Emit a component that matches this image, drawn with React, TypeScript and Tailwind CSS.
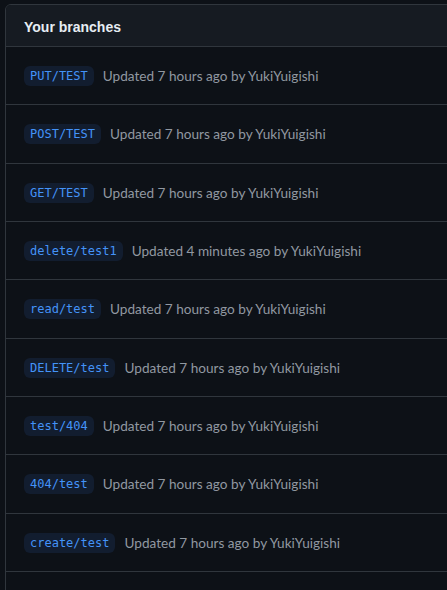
const branches = [
  { name: "PUT/TEST", when: "7 hours ago" },
  { name: "POST/TEST", when: "7 hours ago" },
  { name: "GET/TEST", when: "7 hours ago" },
  { name: "delete/test1", when: "4 minutes ago" },
  { name: "read/test", when: "7 hours ago" },
  { name: "DELETE/test", when: "7 hours ago" },
  { name: "test/404", when: "7 hours ago" },
  { name: "404/test", when: "7 hours ago" },
  { name: "create/test", when: "7 hours ago" },
];

export default function App() {
  return (
    <div
      className="w-[447px] h-[590px] overflow-hidden bg-[#0d1117] pt-1 pl-[5px]"
      style={{ fontFamily: 'Lato, "Liberation Sans", Arial, sans-serif' }}
    >
      <div className="w-[460px] border border-[#30363d] rounded-tl-md overflow-hidden">
        {/* Header */}
        <div className="h-[41px] bg-[#161b22] flex items-center pl-[18px] pt-[3px]">
          <h2
            className="text-[14px] font-bold text-[#e6edf3]"
            style={{ fontFamily: '"Liberation Sans", Arial, sans-serif' }}
          >
            Your branches
          </h2>
        </div>

        {/* Branch rows */}
        {branches.map((b) => (
          <div
            key={b.name}
            className="h-[58.33px] border-t border-[#30363d] flex items-center pl-[18px] pt-[1px] gap-[9px]"
          >
            <span
              className="h-[20px] px-[6px] rounded-md bg-[#121d2f] text-[#4493f8] text-[12px] leading-[20px]"
              style={{ fontFamily: '"DejaVu Sans Mono", "Liberation Mono", monospace' }}
            >
              {b.name}
            </span>
            <span className="text-[13.6px] text-[#9198a1]">
              Updated {b.when} by YukiYuigishi
            </span>
          </div>
        ))}

        {/* next row, scrolled out of view */}
        <div className="h-[58.33px] border-t border-[#30363d]" />
      </div>
    </div>
  );
}
